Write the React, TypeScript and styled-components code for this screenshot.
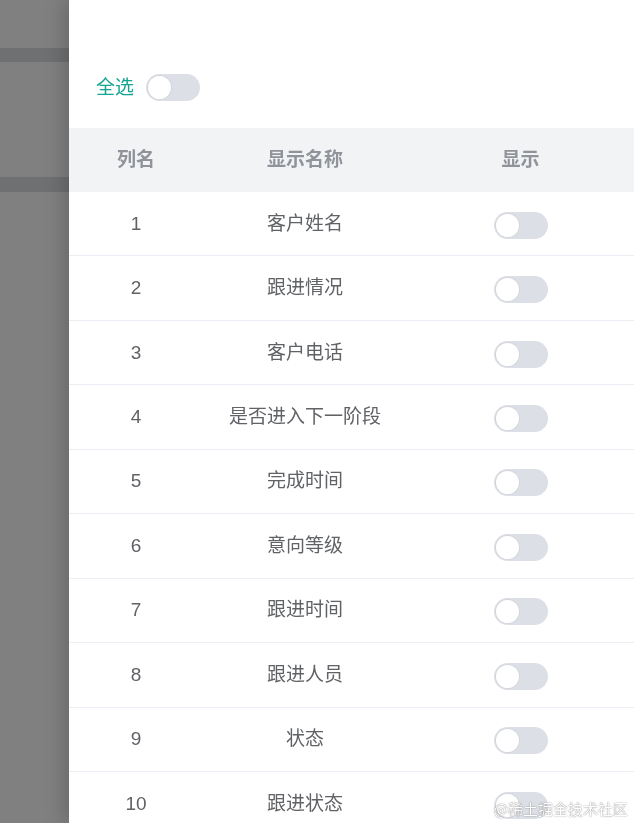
import React, { useState } from "react";
import styled, { createGlobalStyle } from "styled-components";

const GlobalStyle = createGlobalStyle`
  html, body { margin: 0; padding: 0; }
  body {
    background: #808080;
    font-family: "Liberation Sans", "Noto Sans CJK SC", sans-serif;
    overflow: hidden;
  }
`;

const Backdrop = styled.div`
  display: flex;
  flex-direction: column;
  height: 823px;
  padding-top: 48px;
  box-sizing: border-box;
`;

const Band = styled.div<{ $h: number; $gap: number }>`
  height: ${(p) => p.$h}px;
  margin-bottom: ${(p) => p.$gap}px;
  background: #6f7071;
  flex: none;
`;

const Drawer = styled.aside`
  position: fixed;
  top: 0;
  bottom: 0;
  left: 69px;
  right: 0;
  background: #fff;
  box-shadow: -6px 0 18px rgba(0, 0, 0, 0.18);
  display: flex;
  flex-direction: column;
  overflow: hidden;
`;

const Toolbar = styled.div`
  flex: none;
  height: 128px;
  box-sizing: border-box;
  padding: 74px 0 0 27px;
  display: flex;
  align-items: flex-start;
`;

const ToolbarInner = styled.div`
  display: flex;
  align-items: center;
  gap: 12px;
  height: 27px;
`;

const SelectAllLabel = styled.span`
  color: #13a592;
  font-size: 19px;
  line-height: 27px;
`;

const Track = styled.button<{ $on: boolean }>`
  position: relative;
  width: 54px;
  height: 27px;
  border: none;
  padding: 0;
  border-radius: 14px;
  background: ${(p) => (p.$on ? "#13a592" : "#dcdfe6")};
  cursor: pointer;
  flex: none;
`;

const Knob = styled.span<{ $on: boolean }>`
  position: absolute;
  top: 2px;
  left: ${(p) => (p.$on ? "29px" : "2px")};
  width: 23px;
  height: 23px;
  border-radius: 50%;
  background: #fff;
  box-shadow: 0 0 0 1px #d4d6db;
  transition: left 0.2s;
`;

const Table = styled.div`
  display: flex;
  flex-direction: column;
  flex: none;
`;

const Grid = styled.div`
  display: grid;
  grid-template-columns: 134px 204px 1fr;
  align-items: center;
  flex: none;
`;

const HeaderRow = styled(Grid)`
  height: 64px;
  background: #f2f3f5;
`;

const HeadCell = styled.div`
  text-align: center;
  color: #909399;
  font-weight: bold;
  font-size: 19px;
  line-height: 26px;
`;

const BodyRow = styled(Grid)`
  height: 64.45px;
  box-sizing: border-box;
  border-bottom: 1px solid #ebeef5;
`;

const Cell = styled.div<{ $shift?: number }>`
  color: #606266;
  font-size: 19px;
  line-height: 26px;
  height: 27px;
  display: flex;
  align-items: center;
  justify-content: center;
  padding-top: ${(p) => p.$shift ?? 0}px;
`;

const Watermark = styled.div`
  position: fixed;
  right: 6px;
  bottom: 4px;
  font-size: 15px;
  color: #ffffff;
  text-shadow: 0 0 1px rgba(0, 0, 0, 0.55), 0 0 2px rgba(0, 0, 0, 0.2);
  font-family: "Noto Sans CJK SC", sans-serif;
  pointer-events: none;
`;

const columns = [
  "客户姓名",
  "跟进情况",
  "客户电话",
  "是否进入下一阶段",
  "完成时间",
  "意向等级",
  "跟进时间",
  "跟进人员",
  "状态",
  "跟进状态",
];

function Switch({ on, onToggle }: { on: boolean; onToggle: () => void }) {
  return (
    <Track $on={on} onClick={onToggle} aria-pressed={on}>
      <Knob $on={on} />
    </Track>
  );
}

export default function App() {
  const [all, setAll] = useState(false);
  const [shown, setShown] = useState<boolean[]>(columns.map(() => false));

  return (
    <>
      <GlobalStyle />
      <Backdrop>
        <Band $h={14} $gap={115} />
        <Band $h={15} $gap={0} />
      </Backdrop>
      <Drawer>
        <Toolbar>
          <ToolbarInner>
            <SelectAllLabel>全选</SelectAllLabel>
            <Switch
              on={all}
              onToggle={() => {
                const v = !all;
                setAll(v);
                setShown(columns.map(() => v));
              }}
            />
          </ToolbarInner>
        </Toolbar>
        <Table>
          <HeaderRow>
            <HeadCell>列名</HeadCell>
            <HeadCell>显示名称</HeadCell>
            <HeadCell>显示</HeadCell>
          </HeaderRow>
          {columns.map((name, i) => (
            <BodyRow key={name}>
              <Cell>{i + 1}</Cell>
              <Cell>{name}</Cell>
              <Cell $shift={3}>
                <Switch
                  on={shown[i]}
                  onToggle={() =>
                    setShown((s) => s.map((x, j) => (j === i ? !x : x)))
                  }
                />
              </Cell>
            </BodyRow>
          ))}
        </Table>
      </Drawer>
      <Watermark>@稀土掘金技术社区</Watermark>
    </>
  );
}
